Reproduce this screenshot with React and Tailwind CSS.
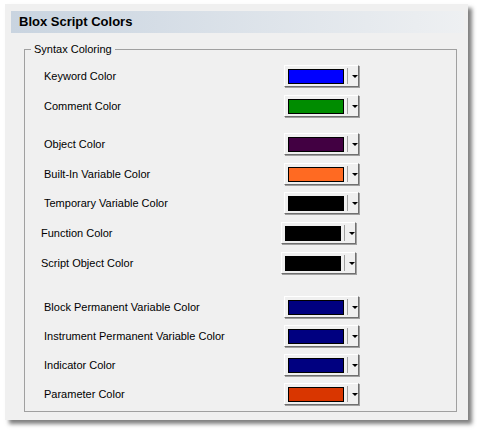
import React from 'react'

const rows = [
  { label: 'Keyword Color', color: '#0000ff', mt: 'mt-[15px]' },
  { label: 'Comment Color', color: '#008c00', mt: 'mt-[8px]' },
  { label: 'Object Color', color: '#420042', mt: 'mt-[16px]' },
  { label: 'Built-In Variable Color', color: '#ff6a22', mt: 'mt-[8px]' },
  { label: 'Temporary Variable Color', color: '#000000', mt: 'mt-[7px]' },
  { label: 'Function Color', color: '#000000', mt: 'mt-[8px]', shift: true },
  { label: 'Script Object Color', color: '#000000', mt: 'mt-[8px]', shift: true },
  { label: 'Block Permanent Variable Color', color: '#000080', mt: 'mt-[22px]' },
  { label: 'Instrument Permanent Variable Color', color: '#000080', mt: 'mt-[7px]' },
  { label: 'Indicator Color', color: '#000080', mt: 'mt-[7px]' },
  { label: 'Parameter Color', color: '#d93600', mt: 'mt-[7px]' },
]

function ColorButton({ color }) {
  return (
    <div className="w-[75px] h-[22px] flex items-center bg-[#f0f0f0] border border-t-white border-l-white border-r-[#707070] border-b-[#707070] shadow-[1px_1px_0_#a0a0a0]">
      <div className="ml-[3px] w-[56px] h-[15px] border border-black" style={{ backgroundColor: color }} />
      <div className="ml-[3px] w-px h-[16px] bg-[#a0a0a0]" />
      <div className="ml-[4px] w-0 h-0 border-l-[3px] border-r-[3px] border-t-[3px] border-l-transparent border-r-transparent border-t-black" />
    </div>
  )
}

export default function App() {
  return (
    <div className="w-[477px] h-[433px] bg-white pt-[4px] pl-[5px]" style={{ fontFamily: '"Liberation Sans", Arial, sans-serif' }}>
      <div className="w-[463px] h-[416px] bg-[#f0f0f0] pt-[7px] shadow-[4px_4px_4px_rgba(0,0,0,0.5)]">
        <div className="h-[22px] ml-[6px] mr-[4px] flex items-center pl-[8px] bg-gradient-to-r from-[#c9d4e0] to-[#eef0f2] text-[13px] font-bold text-black">
          Blox Script Colors
        </div>
        <div className="relative ml-[19px] mt-[16px] w-[433px] h-[363px] border border-[#a0a0a0]">
          <span className="absolute -top-[8px] left-[6px] px-[3px] bg-[#f0f0f0] text-[11px] leading-[14px] text-black">Syntax Coloring</span>
          <div className="flex flex-col">
            {rows.map((r) => (
              <div key={r.label} className={`flex items-center h-[22px] ${r.mt} ${r.shift ? 'pl-[16px]' : 'pl-[19px]'}`}>
                <span className="w-[240px] text-[11px] text-black">{r.label}</span>
                <ColorButton color={r.color} />
              </div>
            ))}
          </div>
        </div>
      </div>
    </div>
  )
}
